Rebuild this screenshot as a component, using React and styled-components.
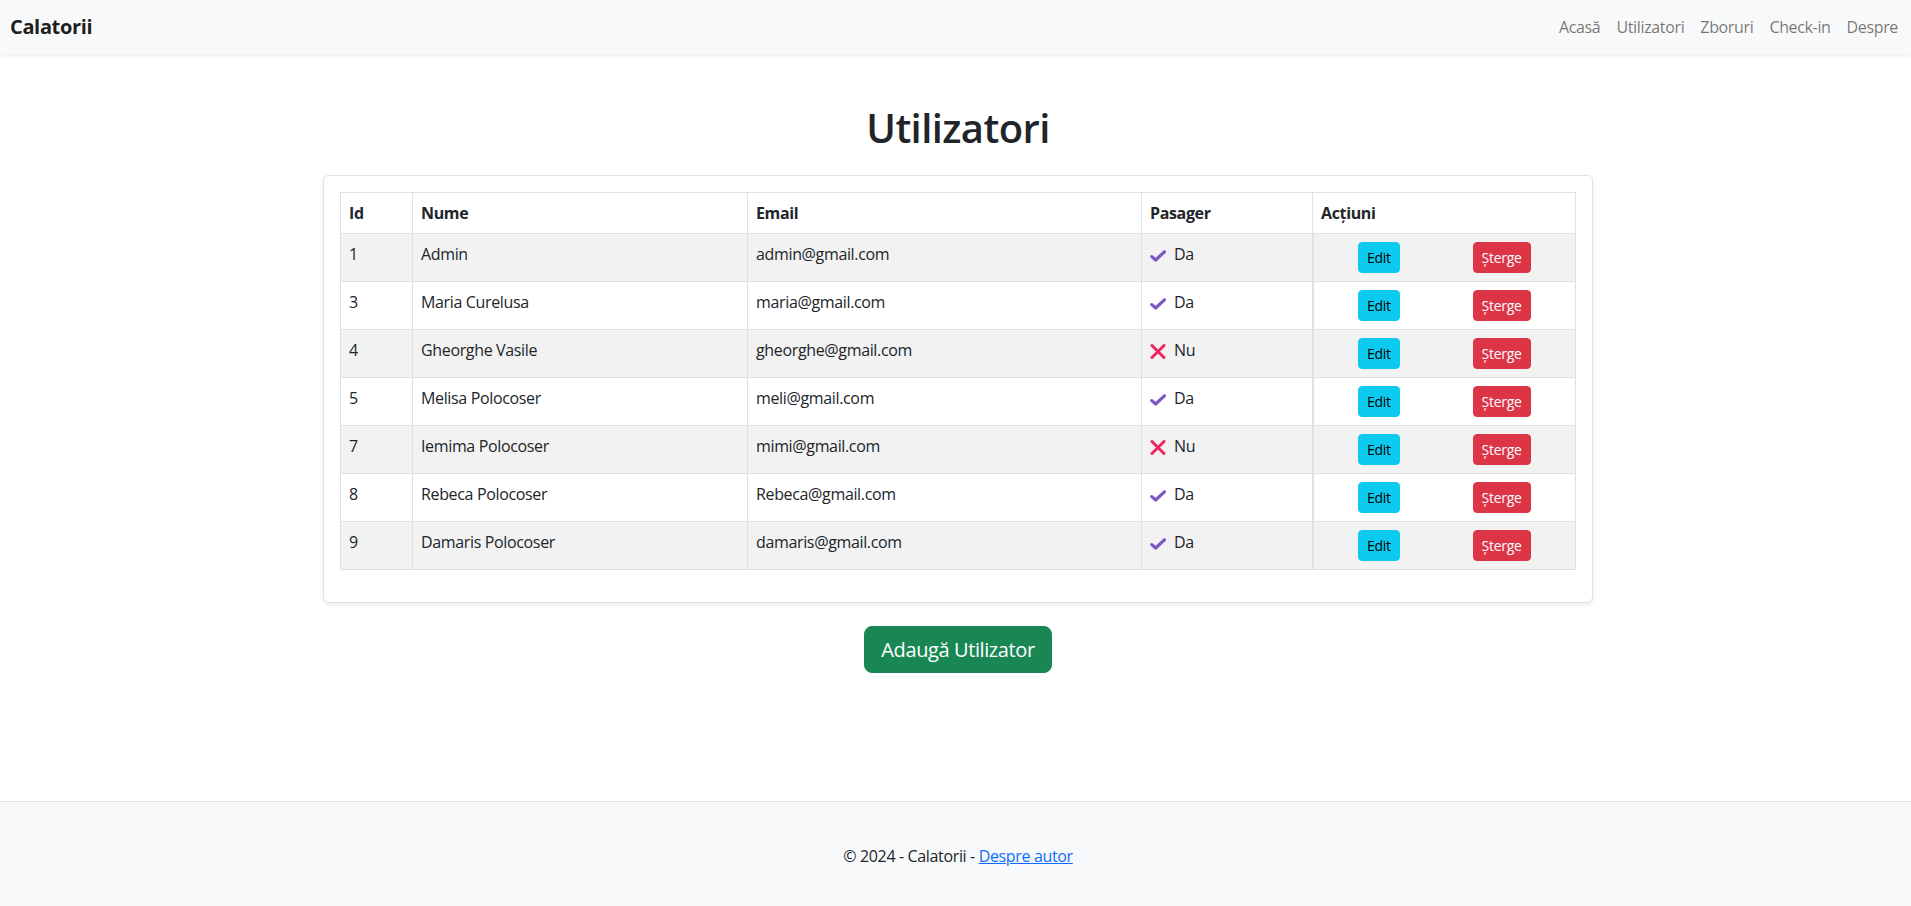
import React from "react";
import styled, { createGlobalStyle } from "styled-components";

const GlobalStyle = createGlobalStyle`
  html, body {
    margin: 0;
    padding: 0;
  }
  body {
    font-family: "Open Sans", "Noto Sans", "Liberation Sans", sans-serif;
    font-size: 16px;
    line-height: 1.5;
    letter-spacing: -0.35px;
    color: #212529;
    background: #fff;
  }
  * {
    box-sizing: border-box;
  }
`;

const users = [
  { id: 1, name: "Admin", email: "admin@gmail.com", passenger: true },
  { id: 3, name: "Maria Curelusa", email: "maria@gmail.com", passenger: true },
  { id: 4, name: "Gheorghe Vasile", email: "gheorghe@gmail.com", passenger: false },
  { id: 5, name: "Melisa Polocoser", email: "meli@gmail.com", passenger: true },
  { id: 7, name: "Iemima Polocoser", email: "mimi@gmail.com", passenger: false },
  { id: 8, name: "Rebeca Polocoser", email: "Rebeca@gmail.com", passenger: true },
  { id: 9, name: "Damaris Polocoser", email: "damaris@gmail.com", passenger: true },
];

const navLinks = ["Acasă", "Utilizatori", "Zboruri", "Check-in", "Despre"];

const Page = styled.div`
  min-height: 100vh;
  display: flex;
  flex-direction: column;
`;

const Navbar = styled.nav`
  position: relative;
  z-index: 1;
  height: 54px;
  display: flex;
  align-items: center;
  justify-content: space-between;
  padding: 0 5px 0 10px;
  background: #f8f9fa;
  box-shadow: 0 2px 4px rgba(0, 0, 0, 0.075);
`;

const Brand = styled.a`
  font-size: 20px;
  font-weight: 700;
  color: rgba(0, 0, 0, 0.9);
  text-decoration: none;
`;

const NavList = styled.div`
  display: flex;
`;

const NavLink = styled.a`
  padding: 8px;
  color: rgba(0, 0, 0, 0.55);
  text-decoration: none;
`;

const Main = styled.main`
  flex: 1;
  display: flex;
  flex-direction: column;
  align-items: center;
  padding: 50px 0 0 5px;
`;

const Title = styled.h1`
  margin: 0 0 23px;
  font-size: 40px;
  line-height: 48px;
  font-weight: 600;
  letter-spacing: -0.6px;
`;

const Card = styled.div`
  width: 1270px;
  padding: 16px;
  border: 1px solid #dee2e6;
  border-radius: 6px;
  background: #fff;
  box-shadow: 0 2px 4px rgba(0, 0, 0, 0.075);
`;

const Table = styled.table`
  width: 100%;
  table-layout: fixed;
  border-collapse: collapse;
  margin-bottom: 16px;
`;

const HeadCell = styled.th`
  padding: 8px;
  border: 1px solid #dee2e6;
  text-align: left;
  font-weight: 700;
  vertical-align: top;
`;

const Row = styled.tr`
  background: ${(p) => (p.$striped ? "#f2f2f2" : "#fff")};
`;

const Cell = styled.td`
  padding: 8px;
  border: 1px solid #dee2e6;
  border-left-width: ${(p) => (p.$thick ? "2px" : "1px")};
  vertical-align: top;
`;

const Status = styled.span`
  display: inline-flex;
  align-items: center;
  gap: 8px;

  svg {
    margin-top: ${(p) => (p.$ok ? "4px" : "2px")};
  }
`;

const Actions = styled.div`
  display: flex;
  justify-content: space-around;
`;

const SmallButton = styled.button`
  font-family: inherit;
  font-size: 14px;
  line-height: 21px;
  letter-spacing: -0.3px;
  padding: 4px 8px;
  border-radius: 4px;
  border: 1px solid ${(p) => (p.$danger ? "#dc3545" : "#0dcaf0")};
  background: ${(p) => (p.$danger ? "#dc3545" : "#0dcaf0")};
  color: ${(p) => (p.$danger ? "#fff" : "#000")};
  cursor: pointer;
`;

const AddButton = styled.button`
  margin-top: 23px;
  font-family: inherit;
  font-size: 20px;
  line-height: 29px;
  letter-spacing: -0.4px;
  padding: 8px 16px;
  border-radius: 8px;
  border: 1px solid #198754;
  background: #198754;
  color: #fff;
  cursor: pointer;
`;

const Footer = styled.footer`
  border-top: 1px solid #dee2e6;
  background: #f8f9fa;
  padding: 42px 0 38px 5px;
  text-align: center;
  line-height: 24px;
`;

const FooterLink = styled.a`
  color: #0d6efd;
  text-decoration: underline;
`;

const CheckIcon = () => (
  <svg width="16" height="12" viewBox="0 0 16 12">
    <path
      d="M1.8 6.6 L5.6 10 L14.4 1.8"
      fill="none"
      stroke="#7b58c6"
      strokeWidth="3.2"
      strokeLinecap="round"
      strokeLinejoin="round"
    />
  </svg>
);

const CrossIcon = () => (
  <svg width="16" height="15" viewBox="0 0 16 15">
    <path
      d="M2 1.5 L14 13.5 M14 1.5 L2 13.5"
      fill="none"
      stroke="#f0285a"
      strokeWidth="3"
      strokeLinecap="round"
    />
  </svg>
);

const App = () => (
  <Page>
    <GlobalStyle />
    <Navbar>
      <Brand href="#">Calatorii</Brand>
      <NavList>
        {navLinks.map((l) => (
          <NavLink key={l} href="#">
            {l}
          </NavLink>
        ))}
      </NavList>
    </Navbar>

    <Main>
      <Title>Utilizatori</Title>
      <Card>
        <Table>
          <colgroup>
            <col style={{ width: 72 }} />
            <col style={{ width: 335 }} />
            <col style={{ width: 394 }} />
            <col style={{ width: 171 }} />
            <col />
          </colgroup>
          <thead>
            <tr>
              <HeadCell>Id</HeadCell>
              <HeadCell>Nume</HeadCell>
              <HeadCell>Email</HeadCell>
              <HeadCell>Pasager</HeadCell>
              <HeadCell>Acțiuni</HeadCell>
            </tr>
          </thead>
          <tbody>
            {users.map((u, i) => (
              <Row key={u.id} $striped={i % 2 === 0}>
                <Cell>{u.id}</Cell>
                <Cell>{u.name}</Cell>
                <Cell>{u.email}</Cell>
                <Cell>
                  <Status $ok={u.passenger}>
                    {u.passenger ? <CheckIcon /> : <CrossIcon />}
                    {u.passenger ? "Da" : "Nu"}
                  </Status>
                </Cell>
                <Cell $thick>
                  <Actions>
                    <SmallButton>Edit</SmallButton>
                    <SmallButton $danger>Șterge</SmallButton>
                  </Actions>
                </Cell>
              </Row>
            ))}
          </tbody>
        </Table>
      </Card>
      <AddButton>Adaugă Utilizator</AddButton>
    </Main>

    <Footer>
      © 2024 - Calatorii - <FooterLink href="#">Despre autor</FooterLink>
    </Footer>
  </Page>
);

export default App;
